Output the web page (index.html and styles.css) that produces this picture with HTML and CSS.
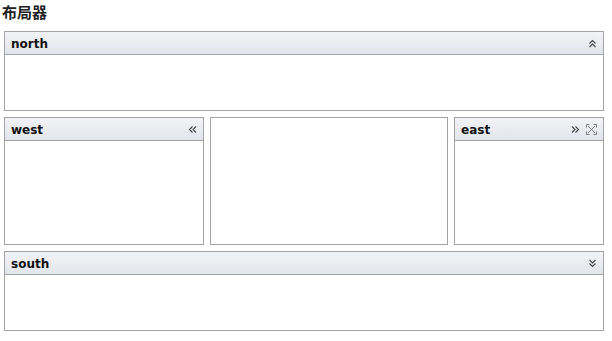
FILE: index.html
```html
<!DOCTYPE html>
<html lang="zh">
<head>
    <meta charset="UTF-8">
    <meta name="viewport" content="width=device-width, initial-scale=1.0">
    <title>布局器</title>
    <link rel="stylesheet" href="styles.css">
</head>
<body>
    <h1 class="title">布局器</h1>

    <div class="layout">
        <div class="panel north">
            <div class="panel-header">
                <span class="panel-title">north</span>
                <span class="tools">
                    <svg width="9" height="9" viewBox="0 0 9 9"><path d="M1.5 4.5 L4.5 1.5 L7.5 4.5 M1.5 8 L4.5 5 L7.5 8" fill="none" stroke="#444" stroke-width="1.1"/></svg>
                </span>
            </div>
            <div class="panel-body"></div>
        </div>

        <div class="middle">
            <div class="panel west">
                <div class="panel-header">
                    <span class="panel-title">west</span>
                    <span class="tools">
                        <svg width="9" height="9" viewBox="0 0 9 9"><path d="M4.5 1.5 L1.5 4.5 L4.5 7.5 M8 1.5 L5 4.5 L8 7.5" fill="none" stroke="#444" stroke-width="1.1"/></svg>
                    </span>
                </div>
                <div class="panel-body"></div>
            </div>

            <div class="panel center">
                <div class="panel-body"></div>
            </div>

            <div class="panel east">
                <div class="panel-header">
                    <span class="panel-title">east</span>
                    <span class="tools">
                        <svg width="9" height="9" viewBox="0 0 9 9"><path d="M1 1.5 L4 4.5 L1 7.5 M4.5 1.5 L7.5 4.5 L4.5 7.5" fill="none" stroke="#444" stroke-width="1.1"/></svg>
                        <svg width="11" height="11" viewBox="0 0 11 11"><path d="M0.5 3.5 V0.5 H3.5 M7.5 0.5 H10.5 V3.5 M10.5 7.5 V10.5 H7.5 M3.5 10.5 H0.5 V7.5 M2 2 L9 9 M9 2 L2 9" fill="none" stroke="#7a7a7a" stroke-width="1"/></svg>
                    </span>
                </div>
                <div class="panel-body"></div>
            </div>
        </div>

        <div class="panel south">
            <div class="panel-header">
                <span class="panel-title">south</span>
                <span class="tools">
                    <svg width="9" height="9" viewBox="0 0 9 9"><path d="M1.5 1 L4.5 4 L7.5 1 M1.5 4.5 L4.5 7.5 L7.5 4.5" fill="none" stroke="#444" stroke-width="1.1"/></svg>
                </span>
            </div>
            <div class="panel-body"></div>
        </div>
    </div>
</body>
</html>
```

FILE: styles.css
```css
body {
    margin: 0;
    padding: 0 4px;
    font-family: 'DejaVu Sans', Verdana, "Noto Sans CJK SC", sans-serif;
    background-color: #fff;
    color: #000;
}
.title {
    margin: 0 0 7px -2px;
    height: 24px;
    line-height: 24px;
    font-size: 15px;
    font-weight: bold;
    color: #222;
    font-family: "Noto Sans CJK SC", sans-serif;
}
.layout {
    width: 600px;
    display: flex;
    flex-direction: column;
    gap: 6px;
}
.middle {
    display: flex;
    gap: 6px;
    height: 128px;
}
.panel {
    border: 1px solid #a3a3a3;
    display: flex;
    flex-direction: column;
    box-sizing: border-box;
    background: #fff;
}
.north, .south {
    height: 80px;
}
.west {
    width: 200px;
}
.center {
    width: 238px;
}
.east {
    width: 150px;
}
.panel-header {
    box-sizing: border-box;
    height: 23px;
    border-bottom: 1px solid #a3a3a3;
    background: linear-gradient(to bottom, #f2f3f6, #e2e5eb);
    display: flex;
    align-items: center;
    justify-content: space-between;
    padding: 1px 6px 0 6px;
}
.panel-title {
    font-size: 12px;
    font-weight: bold;
    color: #111;
}
.tools {
    display: flex;
    align-items: center;
    gap: 6px;
}
.tools svg {
    display: block;
}
.panel-body {
    flex: 1;
}
```
